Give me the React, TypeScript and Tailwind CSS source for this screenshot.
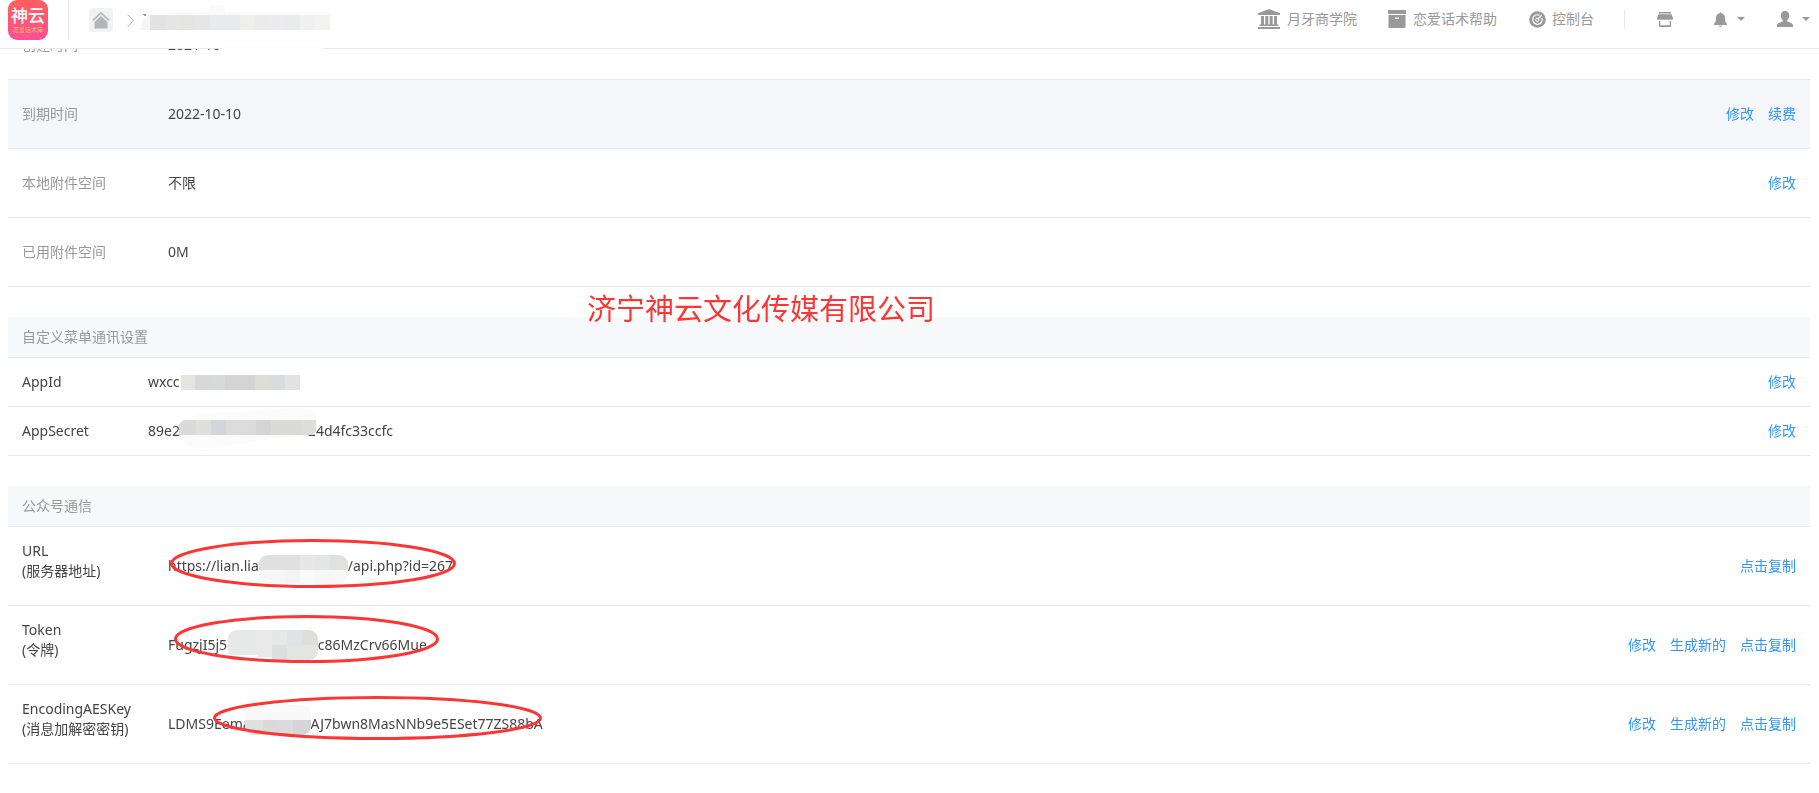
import type { ReactNode } from "react";

type Tile = [x: number, y: number, w: number, h: number, fill: string];

function Mosaic({ width, height, radius, tiles, id, className = "" }: { width: number; height: number; radius: number; tiles: Tile[]; id: string; className?: string }) {
  return (
    <svg aria-hidden="true" width={width} height={height} viewBox={`0 0 ${width} ${height}`} className={`relative block shrink-0 ${className}`}>
      <clipPath id={id}>
        <rect width={width} height={height} rx={radius} />
      </clipPath>
      <g clipPath={`url(#${id})`} shapeRendering="crispEdges">
        {tiles.map(([x, y, w, h, fill], i) => (
          <rect key={i} x={x} y={y} width={w} height={h} fill={fill} />
        ))}
      </g>
    </svg>
  );
}

function Ring({ width, height, className }: { width: number; height: number; className: string }) {
  return (
    <svg aria-hidden="true" width={width} height={height} className={`pointer-events-none absolute ${className}`}>
      <ellipse cx={width / 2} cy={height / 2} rx={width / 2 - 1.5} ry={height / 2 - 1.5} fill="none" stroke="#fc3535" strokeWidth="3" />
    </svg>
  );
}

function Actions({ items }: { items: string[] }) {
  return (
    <div className="flex justify-end gap-[14px]">
      {items.map((item) => (
        <a key={item} href="#" className="text-[#3296fa]">
          {item}
        </a>
      ))}
    </div>
  );
}

const cell = "border-b border-[#e7e8eb] px-[14px] py-0 text-left font-normal";

function InfoRow({ label, value, actions = [], active = false }: { label: string; value: ReactNode; actions?: string[]; active?: boolean }) {
  return (
    <tr className={active ? "h-[69px] bg-[#f4f6fa]" : "h-[69px]"}>
      <th scope="row" className={`${cell} w-[146px] text-[#999]`}>{label}</th>
      <td className={cell}>{value}</td>
      <td className={cell}><Actions items={actions} /></td>
    </tr>
  );
}

function KeyRow({ label, value, actions }: { label: string; value: ReactNode; actions: string[] }) {
  return (
    <tr className="h-[49px]">
      <th scope="row" className={`${cell} w-[126px]`}>{label}</th>
      <td className={cell}>{value}</td>
      <td className={cell}><Actions items={actions} /></td>
    </tr>
  );
}

function ServerRow({ label, note, value, actions }: { label: string; note: string; value: ReactNode; actions: string[] }) {
  return (
    <tr className="h-[79px]">
      <th scope="row" className={`${cell} w-[146px] whitespace-nowrap`}>
        <p className="mb-[10px]">
          {label}
          <br />
          {note}
        </p>
      </th>
      <td className={cell}>{value}</td>
      <td className={cell}><Actions items={actions} /></td>
    </tr>
  );
}

function Heading({ children }: { children: ReactNode }) {
  return <h2 className="flex h-[41px] items-center border-b border-[#e7e8eb] bg-[#f6f8fa] px-[14px] text-[#999]">{children}</h2>;
}

function Caret() {
  return (
    <svg aria-hidden="true" width="8" height="4" viewBox="0 0 8 4" fill="currentColor">
      <path d="M0 0h8L4 4z" />
    </svg>
  );
}

function Header() {
  return (
    <header className="sticky top-0 z-10 flex h-[49px] items-start justify-between border-b border-[#e7e7eb] bg-white pr-[9px] pl-2 text-[#999]">
      <div className="flex items-start">
        <a href="#" className="flex size-10 flex-col items-center rounded-[9px] bg-linear-to-b from-[#ff5d5c] to-[#ff4f92] pt-[6px] text-white">
          <span className="text-[17px] leading-[19px] font-medium">神云</span>
          <span className="text-[6px] leading-[10px] whitespace-nowrap text-[#e8c070]">恋爱话术库</span>
        </a>
        <span className="ml-5 h-10 w-px bg-[#e7e7eb]" />
        <nav aria-label="位置" className="ml-5 flex h-10 items-center">
          <a href="#" aria-label="首页" className="flex size-6 items-center justify-center rounded bg-[#f0f2f4] text-[#b5b5b5]">
            <svg aria-hidden="true" width="18" height="18" viewBox="0 0 18 18">
              <path d="M1 9.3 9 1.800 17 9.3" fill="none" stroke="currentColor" strokeWidth="1.700" />
              <path d="M9 5 15.500 11v6.500h-13V11z" fill="currentColor" />
            </svg>
          </a>
          <svg aria-hidden="true" width="8" height="13" viewBox="0 0 8 13" className="ml-[14px]" fill="none" stroke="#aaa">
            <path d="m.7.5 6 6-6 6" />
          </svg>
          <span className="relative ml-[5px] block h-8 w-[190px]">
            <svg aria-hidden="true" width="190" height="32" viewBox="0 0 190 32" shapeRendering="crispEdges">
              <path d="M3 10h3v3l-1-1-2-1z" fill="#999" />
              <path d="M25 11V9l7-1h38V1h15v7h90l15 1v2z" fill="#fafafa" />
              <path d="M0 26 3 17l3-6h5v15z" fill="#f6f6f5" />
              <rect x="10" y="11" width="15" height="15" fill="#e2e2e3" />
              <rect x="25" y="11" width="15" height="15" fill="#e5e5e5" />
              <rect x="40" y="11" width="15" height="15" fill="#e4e4e3" />
              <rect x="55" y="11" width="15" height="15" fill="#e6e6e6" />
              <rect x="70" y="11" width="15" height="15" fill="#e9eaeb" />
              <rect x="85" y="11" width="15" height="15" fill="#e8eaec" />
              <rect x="100" y="11" width="15" height="15" fill="#eeeeec" />
              <rect x="115" y="11" width="15" height="15" fill="#ebebeb" />
              <rect x="130" y="11" width="15" height="15" fill="#ececee" />
              <rect x="145" y="11" width="15" height="15" fill="#eaebeb" />
              <rect x="160" y="11" width="15" height="15" fill="#eff0ef" />
              <rect x="175" y="11" width="15" height="15" fill="#f3f3f1" />
            </svg>
            <span className="absolute top-[41px] left-[82px] h-[5px] w-[102px] rounded-full bg-[#fdfdfd]" />
          </span>
        </nav>
      </div>

      <nav aria-label="主导航" className="flex h-[38px] items-center">
        <a href="#" className="flex items-center gap-[7px]">
          <svg aria-hidden="true" width="22" height="20" viewBox="0 0 22 20" fill="currentColor">
            <path d="M11 0 22 4.300V6H0V4.300zM3 7h3v9H3zM7.300 7h3v9h-3zM11.700 7h3v9h-3zM16 7h3v9h-3zM1.500 15.500h19V17h-19zM0 18h22v2H0z" />
          </svg>
          月牙商学院
        </a>
        <a href="#" className="ml-[31px] flex items-center gap-[7px]">
          <svg aria-hidden="true" width="18" height="18" viewBox="0 0 18 18" fill="currentColor">
            <path d="M0 0h18v4H0z" />
            <path fillRule="evenodd" d="M.5 5h17v12q0 1-1 1h-15q-1 0-1-1zM7 7.500v1.500h4V7.500z" />
          </svg>
          恋爱话术帮助
        </a>
        <a href="#" className="ml-8 flex items-center gap-[6px]">
          <svg aria-hidden="true" width="17" height="17" viewBox="0 0 17 17">
            <circle cx="8.500" cy="8.500" r="8.300" fill="currentColor" />
            <path d="M10.700 4.300a4.800 4.800 0 1 0 2.300 2.600" fill="none" stroke="#fff" strokeWidth="1.200" />
            <circle cx="8.300" cy="8.900" r="1.700" fill="none" stroke="#fff" strokeWidth="1" />
            <path d="m8.800 8.300 4-4.300" stroke="#fff" strokeWidth="1.300" />
          </svg>
          控制台
        </a>
        <span className="ml-[30px] h-[19px] w-px bg-[#e7e7eb]" />
        <a href="#" aria-label="商城" className="ml-8">
          <svg aria-hidden="true" width="16" height="15" viewBox="0 0 16 15" fill="currentColor">
            <path d="M2 0h12v1.500H2zM1.500 2.300h13L16 6v1.300q-1 1.300-2 0-1 1.300-2 0-1 1.300-2 0-1 1.300-2 0-1 1.300-2 0-1 1.300-2 0-1 1.300-2 0-1 1.300-2 0V6z" />
            <path d="M2 9h1.300v4.200h9.400V9H14v4.800q0 1.200-1.200 1.200H3.200Q2 15 2 13.800z" />
          </svg>
        </a>
        <button type="button" aria-label="消息" className="ml-[41px] flex items-center gap-[10px]">
          <svg aria-hidden="true" width="13" height="15" viewBox="0 0 13 15" fill="currentColor">
            <path d="M5.500 1.300a1 1 0 0 1 2 0C10 1.900 11 3.800 11 6c0 3.500.7 4.500 2 5.700V13H0v-1.300C1.300 10.500 2 9.500 2 6c0-2.200 1-4.100 3.500-4.700zM5 13.700h3a1.500 1.300 0 0 1-3 0z" />
          </svg>
          <Caret />
        </button>
        <button type="button" aria-label="账户" className="ml-8 flex items-center gap-[9px]">
          <svg aria-hidden="true" width="16" height="16" viewBox="0 0 16 16" fill="currentColor">
            <path d="M8 0c2.600 0 4.200 1.900 4.200 4.500 0 1.900-.8 3.700-2 4.600v1.200c.6.800 5.800 1.200 5.800 4.200V16H0v-1.500c0-3 5.200-3.400 5.800-4.200V9.100c-1.200-.9-2-2.700-2-4.600C3.800 1.900 5.400 0 8 0z" />
          </svg>
          <Caret />
        </button>
      </nav>
    </header>
  );
}

export default function App() {
  return (
    <div className="min-h-screen bg-white font-['Noto_Sans','Noto_Sans_CJK_SC',sans-serif] text-[14px] leading-5 text-[#444]">
      <Header />
      <main className="-mt-[38px] pr-[9px] pb-[30px] pl-2">
        <table className="w-full border-separate border-spacing-0">
          <tbody>
            <InfoRow label="创建时间" value="2021-10" />
            <InfoRow label="到期时间" value="2022-10-10" actions={["修改", "续费"]} active />
            <InfoRow label="本地附件空间" value="不限" actions={["修改"]} />
            <InfoRow label="已用附件空间" value="0M" />
          </tbody>
        </table>

        <section className="relative mt-[30px]">
          <Heading>自定义菜单通讯设置</Heading>
          <p className="absolute -top-7 left-[579px] text-[29px] leading-10 whitespace-nowrap text-[#fc3535]">济宁神云文化传媒有限公司</p>
          <table className="w-full border-separate border-spacing-0">
            <tbody>
              <KeyRow
                label="AppId"
                actions={["修改"]}
                value={
                  <div className="flex items-center">
                    wxcc
                    <Mosaic
                      id="mask-appid"
                      width={120}
                      height={15}
                      radius={0}
                      tiles={[
                        [1, 0, 14, 15, "#e4e4e1"], [15, 0, 15, 15, "#d8d8d8"], [30, 0, 15, 15, "#d8dad9"], [45, 0, 30, 15, "#d4d4d4"],
                        [75, 0, 15, 15, "#dcdcd9"], [90, 0, 15, 15, "#dadbdd"], [105, 0, 15, 15, "#e2e2e2"],
                      ]}
                    />
                  </div>
                }
              />
              <KeyRow
                label="AppSecret"
                actions={["修改"]}
                value={
                  <div className="flex items-center">
                    89e2
                    <span className="relative block h-5 w-[128px]">
                      <svg aria-hidden="true" width="138" height="42" viewBox="0 0 138 42" className="absolute -top-[13px] -left-px max-w-none">
                        <path d="M0 25 20 6 120 0q18 0 18 15v10L30 40Q2 42 0 25z" fill="#fbfbfb" className="mix-blend-multiply" />
                        <g shapeRendering="crispEdges">
                          <path d="M0 27V16l4-4h13v15z" fill="#dadada" />
                          <path d="M17 12h15v15H17z" fill="#dfdfdd" />
                          <path d="M32 12h15v15H32z" fill="#d3d5d8" />
                          <path d="M47 12h15v15H47z" fill="#dcdcda" />
                          <path d="M62 12h15v15H62z" fill="#dbdbdb" />
                          <path d="M77 12h15v15H77z" fill="#d4d4d5" />
                          <path d="M92 12h30v15H92z" fill="#dadad9" />
                          <path d="M122 12h15v11l-4 4h-11z" fill="#dddddb" />
                        </g>
                      </svg>
                    </span>
                    24d4fc33ccfc
                  </div>
                }
              />
            </tbody>
          </table>
        </section>

        <section className="mt-[30px]">
          <Heading>公众号通信</Heading>
          <table className="w-full border-separate border-spacing-0">
            <tbody>
              <ServerRow
                label="URL"
                note="(服务器地址)"
                actions={["点击复制"]}
                value={
                  <div className="relative flex h-5 items-center">
                    https://lian.lia
                    <Mosaic
                      id="mask-url"
                      width={89}
                      height={28}
                      radius={9}
                      className="mt-[6px]"
                      tiles={[
                        [0, 0, 41, 15, "#e0e0e0"], [41, 0, 15, 15, "#e7e7e8"], [56, 0, 15, 15, "#e4e5e8"], [71, 0, 18, 15, "#e1e1df"],
                        [0, 15, 26, 13, "#f6f6f6"], [26, 15, 15, 13, "#f4f4f4"], [41, 15, 15, 13, "#fafafa"], [56, 15, 33, 13, "#f7f7f7"],
                      ]}
                    />
                    /api.php?id=267
                    <Ring width={286} height={49} className="-top-[17px] left-[2px]" />
                  </div>
                }
              />
              <ServerRow
                label="Token"
                note="(令牌)"
                actions={["修改", "生成新的", "点击复制"]}
                value={
                  <div className="relative flex h-5 items-center">
                    FugzjI5j5c
                    <Mosaic
                      id="mask-token"
                      width={90}
                      height={30}
                      radius={9}
                      className="-ml-[6px]"
                      tiles={[
                        [0, 0, 29, 25, "#e7e8e8"], [29, 0, 15, 27, "#e9e9e9"], [44, 0, 15, 15, "#e6e8e6"], [59, 0, 15, 15, "#e1e2e5"],
                        [74, 0, 16, 15, "#dedfdd"], [44, 15, 15, 15, "#dedede"], [59, 15, 31, 15, "#e4e4e3"],
                      ]}
                    />
                    c86MzCrv66Mue
                    <Ring width={265} height={48} className="-top-[20px] left-[6px]" />
                  </div>
                }
              />
              <ServerRow
                label="EncodingAESKey"
                note="(消息加解密密钥)"
                actions={["修改", "生成新的", "点击复制"]}
                value={
                  <div className="relative flex h-5 items-center">
                    LDMS9Eema
                    <Mosaic
                      id="mask-aes"
                      width={66}
                      height={30}
                      radius={9}
                      className="-ml-[6px] mb-2"
                      tiles={[
                        [0, 0, 66, 15, "#f9f9f9"], [0, 15, 18, 15, "#e0e0e0"], [18, 15, 15, 15, "#dadada"], [33, 15, 15, 15, "#dbdbdd"], [48, 15, 18, 15, "#d5d5d5"],
                      ]}
                    />
                    AJ7bwn8MasNNb9e5ESet77ZS88bA
                    <Ring width={329} height={44} className="-top-[18px] left-[45px]" />
                  </div>
                }
              />
            </tbody>
          </table>
        </section>
      </main>
    </div>
  );
}
